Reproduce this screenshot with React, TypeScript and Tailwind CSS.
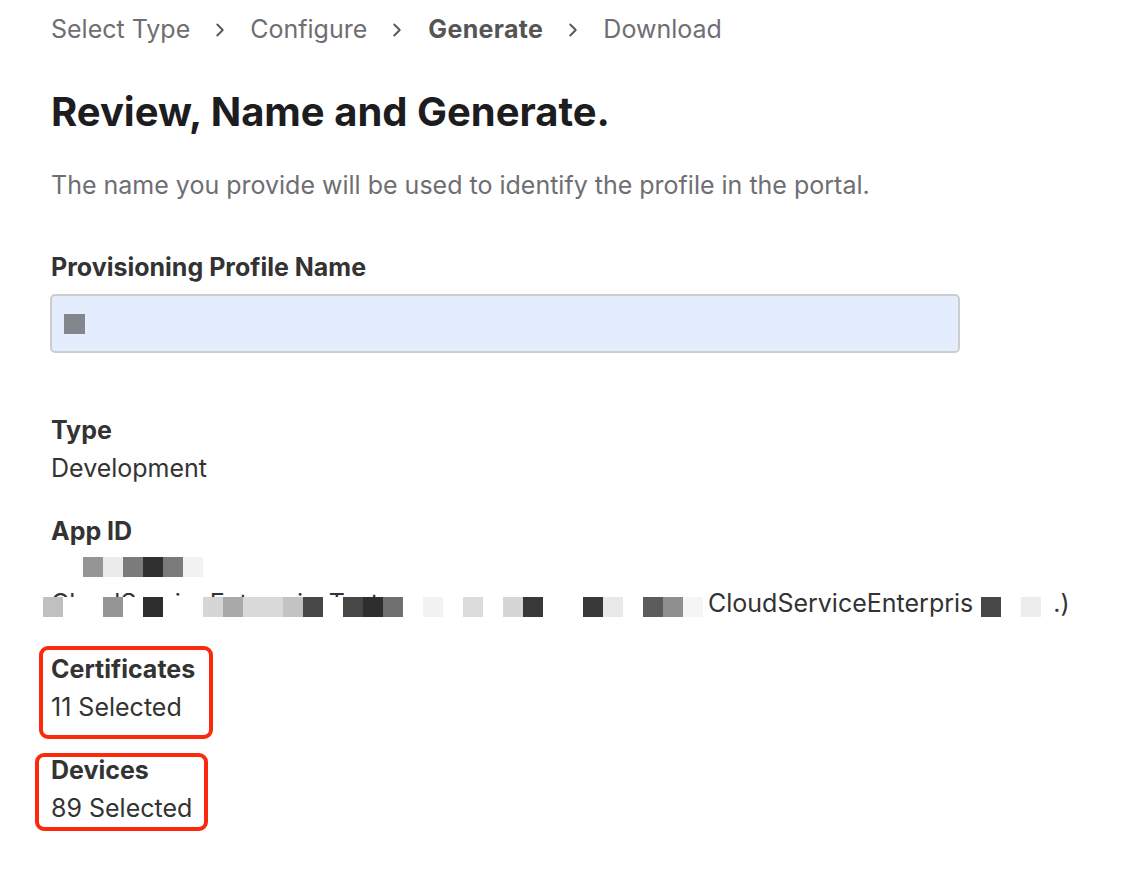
import { ChevronRight } from "lucide-react";

const font = { fontFamily: "Inter, 'Noto Sans', sans-serif" };

// redaction mosaic, 20px cells
const idCells = ["#959595", "#ebebeb", "#7b7b7b", "#303030", "#7a7a7a", "#f2f2f2"];

const nameCells = [
  "#c0c0c0", "", "", "#959595", "", "#2e2e2e", "", "", "#d6d6d6", "#a9a9a9",
  "#d9d9d9", "#d9d9d9", "#c3c3c3", "#474747", "", "#474747", "#2e2e2e", "#6f6f6f", "", "#f2f2f2",
  "", "#dcdcdc", "", "#d6d6d6", "#383838", "", "", "#383838", "#e8e8e8", "",
  "#5c5c5c", "#8f8f8f", "#f5f5f5",
];

function Mosaic({ cells }: { cells: string[] }) {
  return (
    <div className="flex">
      {cells.map((c, i) => (
        <span key={i} className="h-[20px] w-[20px] shrink-0" style={{ background: c || "#fff" }} />
      ))}
    </div>
  );
}

function Crumbs() {
  const steps = ["Select Type", "Configure", "Generate", "Download"];
  return (
    <nav className="flex h-[60px] items-center text-[25px] text-[#6e6e73]">
      {steps.map((s, i) => (
        <div key={s} className="flex items-center">
          {i > 0 && <ChevronRight className="mx-[19px] h-[22px] w-[22px] text-[#555]" strokeWidth={2} />}
          <span className={s === "Generate" ? "pl-px font-bold tracking-[0.35px] text-[#555]" : ""}>{s}</span>
        </div>
      ))}
    </nav>
  );
}

function Field({ label, value }: { label: string; value: string }) {
  return (
    <div className="text-[25px] leading-[38px]">
      <div className="font-bold">{label}</div>
      <div>{value}</div>
    </div>
  );
}

export default function App() {
  return (
    <div className="min-h-[876px] w-[1138px] bg-white pl-[51px] text-[#333]" style={font}>
      <Crumbs />

      <h1 className="mt-[28px] text-[40px] font-bold leading-[48px] text-[#1d1d1f]">
        Review, Name and Generate.
      </h1>

      <p className="mt-[30px] text-[25px] leading-[38px] text-[#6e6e73]">
        The name you provide will be used to identify the profile in the portal.
      </p>

      <div className="mt-[44px] text-[25px] font-bold leading-[38px]">Provisioning Profile Name</div>
      <div className="-ml-px mt-[8px] flex h-[59px] w-[910px] items-center rounded-[5px] border-2 border-[#cdcdcd] bg-[#e3edfd] px-[12px]">
        <span className="h-[20px] w-[21px] bg-[#83868d]" />
      </div>

      <div className="mt-[58px]">
        <Field label="Type" value="Development" />
      </div>

      <div className="mt-[25px] text-[25px] leading-[38px]">
        <div className="font-bold">App ID</div>
        <div className="flex h-[38px] items-start pl-[32px] pt-[7px]">
          <Mosaic cells={idCells} />
        </div>
        <div className="relative flex h-[38px] items-start whitespace-nowrap leading-[30px]">
          <div className="w-[657px] shrink-0 overflow-hidden">CloudServiceEnterpriseTest</div>
          <span>CloudServiceEnterpris</span>
          <div className="flex w-[80px] shrink-0 items-start gap-[20px] pl-[8px] pt-[9px]">
            <span className="h-[20px] w-[20px] bg-[#474747]" />
            <span className="h-[20px] w-[20px] bg-[#ededed]" />
          </div>
          <span>.)</span>
          {/* redaction over the bundle id */}
          <div className="absolute -left-[8px] top-[9px] h-[29px] bg-white">
            <Mosaic cells={nameCells} />
          </div>
          <div className="absolute left-[332px] top-0 h-[9px] w-[320px] bg-white" />
        </div>
      </div>

      <div className="-ml-[12px] mt-[20px] w-[174px] rounded-[9px] border-4 border-[#fb2a0d] pb-[9px] pl-[8px]">
        <Field label="Certificates" value="11 Selected" />
      </div>

      <div className="-ml-[16px] mt-[14px] w-[173px] rounded-[9px] border-4 border-[#fb2a0d] pl-[12px]">
        <div className="-mt-[6px]">
          <Field label="Devices" value="89 Selected" />
        </div>
      </div>
    </div>
  );
}
